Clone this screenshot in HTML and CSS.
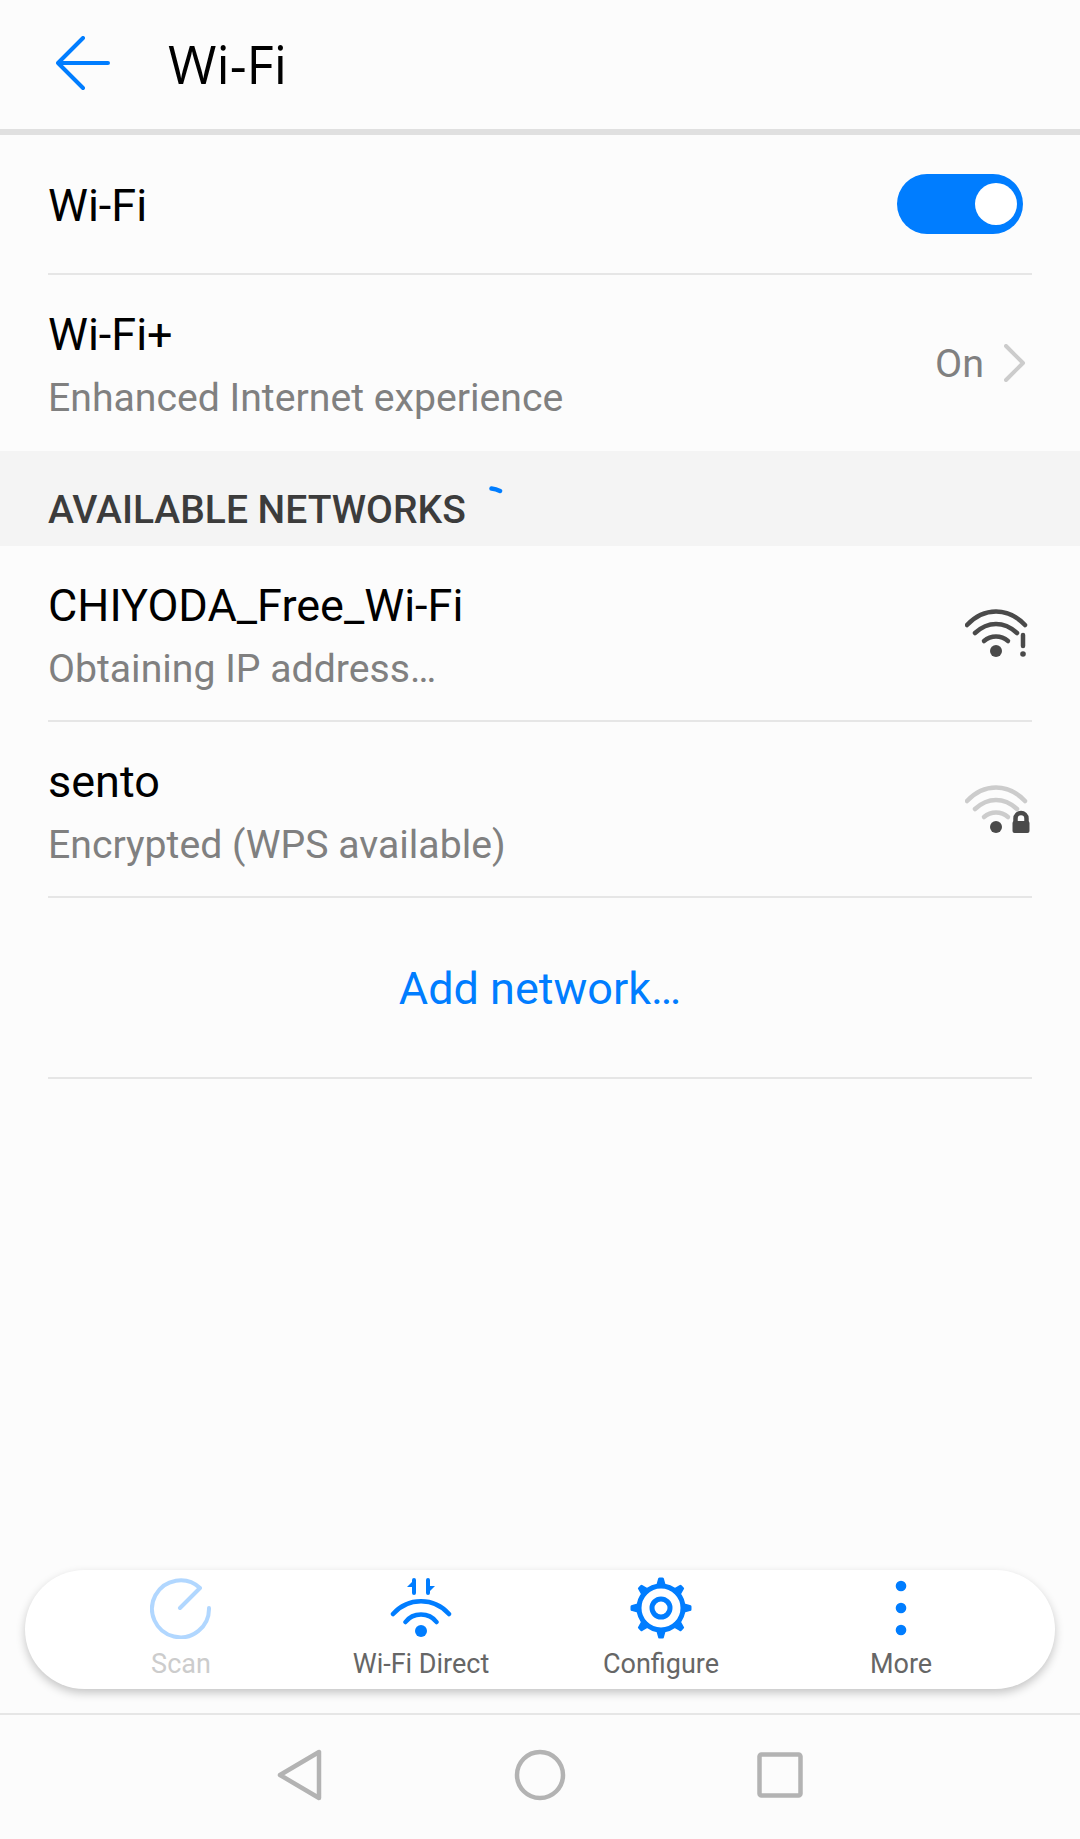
FILE: index.html
```html
<!DOCTYPE html>
<html>

<head>
    <title>Wi-Fi</title>
    <meta charset="UTF-8">
    <link rel="stylesheet" href="styles.css">
</head>

<body>
    <div class="page">
        <header class="header">
            <svg class="back" width="56" height="56" viewBox="0 0 56 56">
                <path d="M27 2 L2 27 L27 52 M2 27 H52" />
            </svg>
            <h1>Wi-Fi</h1>
        </header>

        <div class="row row-switch">
            <div class="row-text">
                <div class="name">Wi-Fi</div>
            </div>
            <div class="switch"><span class="knob"></span></div>
        </div>

        <div class="row row-two row-last">
            <div class="row-text">
                <div class="name">Wi-Fi+</div>
                <div class="sub">Enhanced Internet experience</div>
            </div>
            <div class="status">
                <span>On</span>
                <svg class="chevron" width="22" height="38" viewBox="0 0 22 38">
                    <path d="M2 2 L19 19 L2 36" />
                </svg>
            </div>
        </div>

        <div class="section">
            <span class="section-title">AVAILABLE NETWORKS</span>
            <svg class="spinner" width="14" height="8" viewBox="0 0 14 8">
                <path d="M2.5 2.5 Q7 3 11 5" />
            </svg>
        </div>

        <div class="row row-two row-network">
            <div class="row-text">
                <div class="name">CHIYODA_Free_Wi-Fi</div>
                <div class="sub">Obtaining IP address…</div>
            </div>
            <svg class="wifi" width="66" height="52" viewBox="0 0 66 52">
                <g class="arcs-dark">
                    <path d="M2 16 C19 -2 43 -2 60 16" />
                    <path d="M10 24 C23 12 39 12 52 24" />
                    <path d="M19 32 C26 26 36 26 43 32" />
                </g>
                <circle class="dot" cx="31" cy="42" r="6" />
                <path class="mark" d="M58 26 V37" />
                <circle class="dot" cx="58" cy="45" r="2.8" />
            </svg>
        </div>

        <div class="row row-two row-network">
            <div class="row-text">
                <div class="name">sento</div>
                <div class="sub">Encrypted (WPS available)</div>
            </div>
            <svg class="wifi" width="66" height="52" viewBox="0 0 66 52">
                <g class="arcs-light">
                    <path d="M2 16 C19 -2 43 -2 60 16" />
                    <path d="M10 24 C23 12 39 12 52 24" />
                    <path d="M19 32 C26 26 36 26 43 32" />
                </g>
                <circle class="dot" cx="31" cy="42" r="6" />
                <path class="shackle" d="M50.5 37 V33.5 A5.5 5.5 0 0 1 61.5 33.5 V37" />
                <rect class="dot" x="47.5" y="36" width="17" height="12" rx="2" />
            </svg>
        </div>

        <div class="row row-add">
            <span class="add">Add network…</span>
        </div>

        <div class="spacer"></div>

        <div class="toolbar">
            <div class="tool tool-off">
                <svg width="62" height="62" viewBox="0 0 62 62">
                    <path class="icon-line" d="M50 11 A28.5 28.5 0 1 0 59 31 M50 11 L30 31" />
                </svg>
                <span>Scan</span>
            </div>
            <div class="tool">
                <svg width="62" height="62" viewBox="0 0 62 62">
                    <path class="icon-line" d="M24 3 V16 M38 3 V16" />
                    <path class="icon-fill" d="M25 2 L17 10 H25 Z M37 17 L45 9 H37 Z" />
                    <path class="icon-arc" d="M3 37 C18 20 44 20 59 37 M15.5 45 C23 35 39 35 46.5 45" />
                    <circle class="icon-fill" cx="31" cy="54" r="6" />
                </svg>
                <span>Wi-Fi Direct</span>
            </div>
            <div class="tool">
                <svg width="62" height="62" viewBox="0 0 62 62">
                    <g class="icon-fill">
                        <path d="M28 2 Q28 0.5 29.5 0.5 H32.5 Q34 0.5 34 2 L36.5 11 H25.5 Z" />
                        <path d="M28 2 Q28 0.5 29.5 0.5 H32.5 Q34 0.5 34 2 L36.5 11 H25.5 Z" transform="rotate(45 31 31)" />
                        <path d="M28 2 Q28 0.5 29.5 0.5 H32.5 Q34 0.5 34 2 L36.5 11 H25.5 Z" transform="rotate(90 31 31)" />
                        <path d="M28 2 Q28 0.5 29.5 0.5 H32.5 Q34 0.5 34 2 L36.5 11 H25.5 Z" transform="rotate(135 31 31)" />
                        <path d="M28 2 Q28 0.5 29.5 0.5 H32.5 Q34 0.5 34 2 L36.5 11 H25.5 Z" transform="rotate(180 31 31)" />
                        <path d="M28 2 Q28 0.5 29.5 0.5 H32.5 Q34 0.5 34 2 L36.5 11 H25.5 Z" transform="rotate(225 31 31)" />
                        <path d="M28 2 Q28 0.5 29.5 0.5 H32.5 Q34 0.5 34 2 L36.5 11 H25.5 Z" transform="rotate(270 31 31)" />
                        <path d="M28 2 Q28 0.5 29.5 0.5 H32.5 Q34 0.5 34 2 L36.5 11 H25.5 Z" transform="rotate(315 31 31)" />
                    </g>
                    <circle class="gear-ring" cx="31" cy="31" r="22" />
                    <circle class="gear-ring" cx="31" cy="31" r="9" />
                </svg>
                <span>Configure</span>
            </div>
            <div class="tool">
                <svg width="62" height="62" viewBox="0 0 62 62">
                    <g class="icon-fill">
                        <circle cx="31" cy="9" r="5.3" />
                        <circle cx="31" cy="31" r="5.3" />
                        <circle cx="31" cy="53" r="5.3" />
                    </g>
                </svg>
                <span>More</span>
            </div>
        </div>

        <nav class="navbar">
            <svg width="46" height="52" viewBox="0 0 46 52">
                <path d="M42 3 V49 L3 26 Z" />
            </svg>
            <svg width="52" height="52" viewBox="0 0 52 52">
                <circle cx="26" cy="26" r="23" />
            </svg>
            <svg width="46" height="46" viewBox="0 0 46 46">
                <rect x="2.5" y="2.5" width="41" height="41" rx="2" />
            </svg>
        </nav>
    </div>
</body>

</html>
```

FILE: styles.css
```css
body {
    font-family: Roboto, Arial, sans-serif;
    margin: 0;
    padding: 0;
    background-color: #fcfcfc;
}

.page {
    height: 1839px;
    display: flex;
    flex-direction: column;
    overflow: hidden;
}

.header {
    height: 135px;
    border-bottom: 6px solid #e0e0e0;
    display: flex;
    align-items: center;
    padding-left: 56px;
    box-sizing: border-box;
}

.back {
    margin-bottom: 2px;
    margin-right: -1px;
}

.back path {
    fill: none;
    stroke: #007dff;
    stroke-width: 4;
    stroke-linecap: round;
    stroke-linejoin: round;
}

h1 {
    margin: 0 0 2px 57px;
    font-family: "Open Sans", Arial, sans-serif;
    font-weight: 400;
    font-size: 52.5px;
    color: #000;
}

.row {
    margin: 0 48px;
    display: flex;
    align-items: center;
    justify-content: space-between;
    border-bottom: 2px solid #e6e6e6;
    box-sizing: border-box;
}

.row-switch {
    height: 140px;
}

.row-switch .row-text {
    padding-top: 3px;
}

.row-two {
    height: 176px;
}

.row-two .row-text {
    padding-top: 7px;
}

.row-network .row-text {
    padding-top: 9px;
}

.row-last {
    border-bottom: none;
}

.row-add {
    height: 181px;
    justify-content: center;
    padding-top: 2px;
}

.name {
    font-size: 45px;
    line-height: 62px;
    color: #000;
}

.sub {
    font-size: 39.2px;
    line-height: 64px;
    color: #808080;
}

.switch {
    width: 126px;
    height: 60px;
    border-radius: 30px;
    background-color: #007dff;
    margin-right: 9px;
    display: flex;
    align-items: center;
    justify-content: flex-end;
    padding-right: 6px;
    box-sizing: border-box;
}

.knob {
    width: 42px;
    height: 42px;
    border-radius: 50%;
    background-color: #fff;
}

.status {
    display: flex;
    align-items: center;
    gap: 20px;
    font-size: 39.5px;
    color: #808080;
    margin-right: 6px;
}

.chevron path {
    fill: none;
    stroke: #cccccc;
    stroke-width: 4;
    stroke-linecap: round;
    stroke-linejoin: round;
}

.section {
    height: 95px;
    background-color: #f4f4f4;
    padding: 0 48px;
    position: relative;
    display: flex;
    align-items: flex-end;
    box-sizing: border-box;
}

.section-title {
    font-size: 39px;
    font-weight: 500;
    line-height: 46px;
    color: #3c3c3c;
    padding-bottom: 13px;
}

.spinner {
    position: absolute;
    left: 489px;
    top: 35px;
}

.spinner path {
    fill: none;
    stroke: #007dff;
    stroke-width: 4.5;
    stroke-linecap: round;
}

.wifi {
    margin-right: 1px;
    margin-top: 4px;
}

.arcs-dark path,
.arcs-light path,
.mark,
.shackle {
    fill: none;
    stroke-width: 4.5;
    stroke-linecap: round;
}

.arcs-dark path,
.mark,
.shackle {
    stroke: #4a4a4a;
}

.arcs-light path {
    stroke: #cccccc;
}

.dot {
    fill: #4a4a4a;
}

.add {
    font-size: 45px;
    color: #007dff;
}

.spacer {
    flex: 1;
}

.toolbar {
    height: 119px;
    margin: 0 25px 24px;
    border-radius: 60px;
    background-color: #fff;
    box-shadow: 0 4px 10px rgba(0, 0, 0, 0.22);
    display: grid;
    grid-template-columns: repeat(4, 240px);
    justify-content: center;
    padding-left: 2px;
}

.tool {
    display: flex;
    flex-direction: column;
    align-items: center;
    padding-top: 7px;
    font-size: 27px;
    color: #666;
}

.tool span {
    line-height: 32px;
    margin-top: 9px;
}

.tool-off {
    color: #ccc;
}

.tool-off svg {
    opacity: 0.3;
}

.icon-line,
.icon-arc,
.gear-ring {
    fill: none;
    stroke: #007dff;
    stroke-linecap: round;
}

.icon-line {
    stroke-width: 4;
}

.icon-arc {
    stroke-width: 4.5;
}

.gear-ring {
    stroke-width: 5;
}

.icon-fill {
    fill: #007dff;
}

.navbar {
    height: 126px;
    border-top: 2px solid #e6e6e6;
    display: flex;
    align-items: center;
    justify-content: center;
    gap: 191px;
    padding-bottom: 5px;
    box-sizing: border-box;
}

.navbar svg * {
    fill: none;
    stroke: #b3b3b3;
    stroke-width: 4.5;
    stroke-linejoin: round;
}
```
